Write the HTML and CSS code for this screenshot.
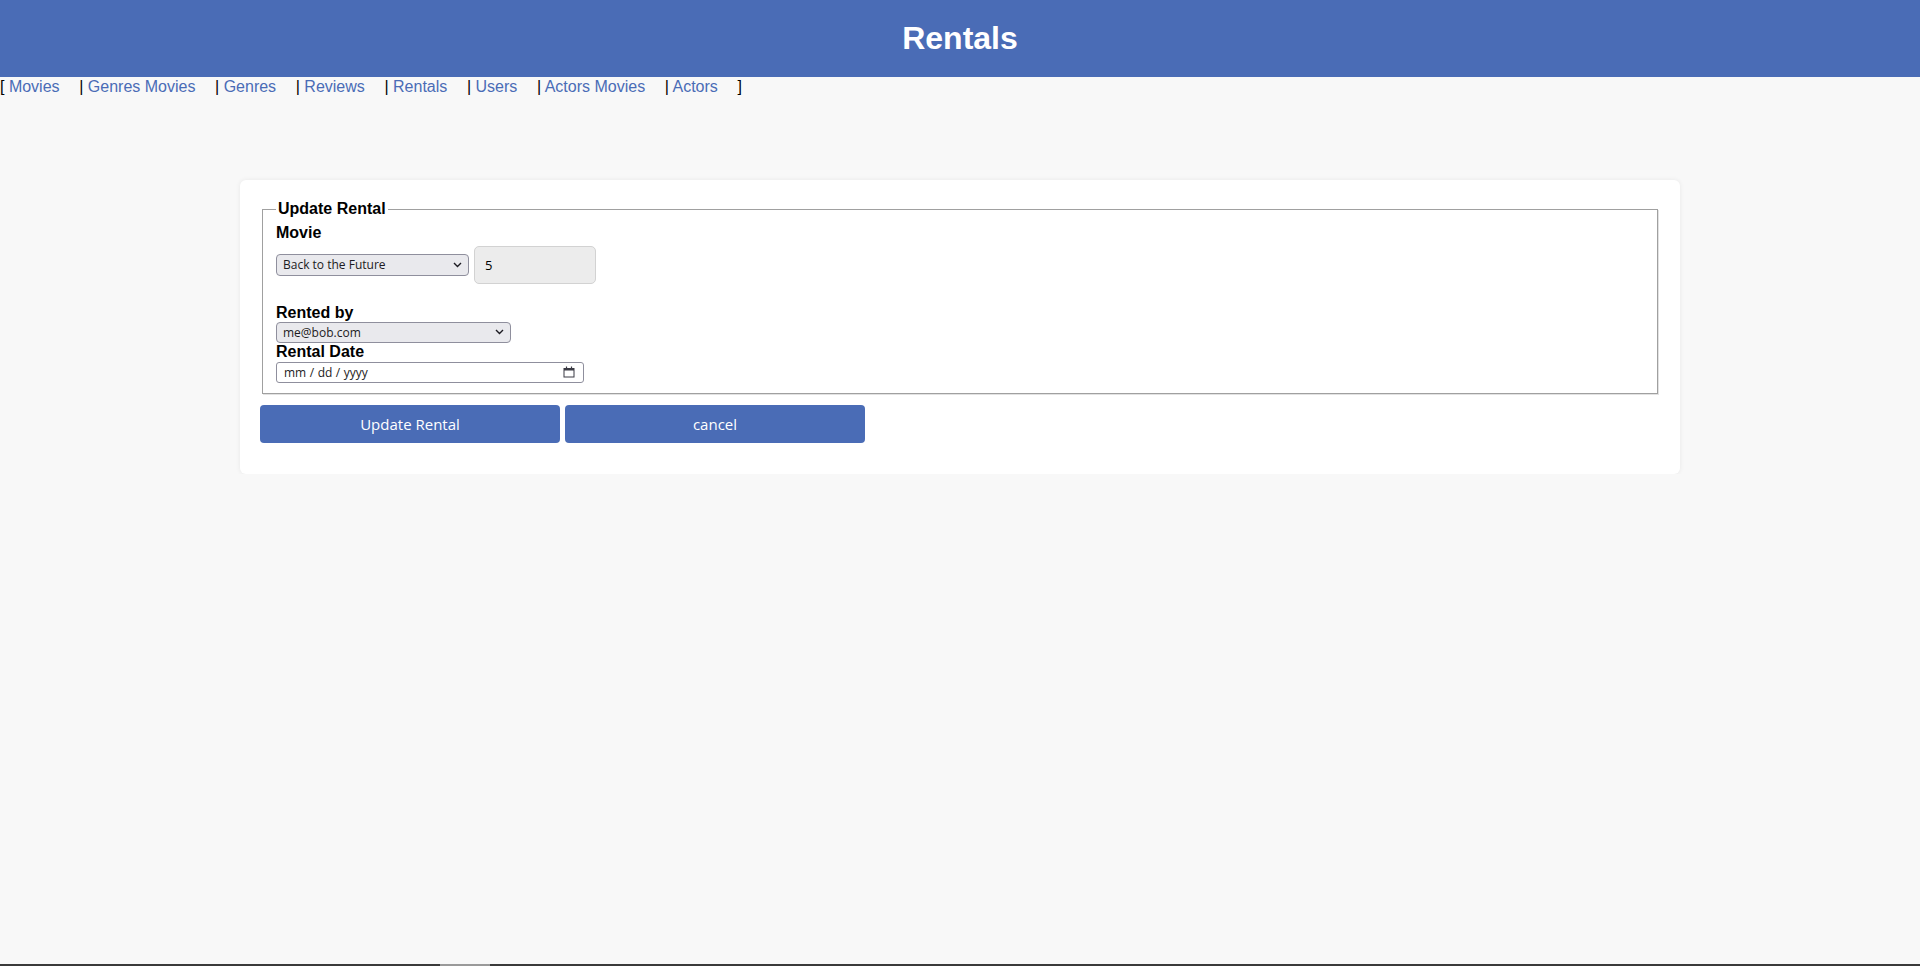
FILE: index.html
```html
<!DOCTYPE html>
<html lang="en">
<head>
<meta charset="utf-8">
<title>Rentals</title>
<link rel="stylesheet" href="styles.css">
</head>
<body>
<header class="topbar">
  <h1 class="title">Rentals</h1>
</header>
<nav class="nav">[ <a class="nav-link" href="#">Movies</a> | <a class="nav-link" href="#">Genres Movies</a> | <a class="nav-link" href="#">Genres</a> | <a class="nav-link" href="#">Reviews</a> | <a class="nav-link" href="#">Rentals</a> | <a class="nav-link" href="#">Users</a> | <a class="nav-link" href="#">Actors Movies</a> | <a class="nav-link" href="#">Actors</a> ]</nav>

<main class="card">
  <form class="form">
    <fieldset class="fieldset">
      <legend class="legend">Update Rental</legend>
      <label class="label" for="movie">Movie</label>
      <div class="movie-row">
        <span class="select-wrap select-movie">
          <select id="movie" class="select">
            <option>Back to the Future</option>
          </select>
          <svg class="chev" width="9" height="6" viewBox="0 0 9 6"><path d="M1 1l3.5 3.5L8 1" fill="none" stroke="#1c1b22" stroke-width="1.4"/></svg>
        </span>
        <input class="num" type="text" value="5" readonly>
      </div>
      <label class="label" for="user">Rented by</label>
      <span class="select-wrap select-user">
        <select id="user" class="select">
          <option>me@bob.com</option>
        </select>
        <svg class="chev" width="9" height="6" viewBox="0 0 9 6"><path d="M1 1l3.5 3.5L8 1" fill="none" stroke="#1c1b22" stroke-width="1.4"/></svg>
      </span>
      <label class="label label-date" for="date">Rental Date</label>
      <span class="date-field">
        <input id="date" class="date" type="date">
        <svg class="cal" width="12" height="12" viewBox="0 0 12 12"><path d="M3.5 0.5v2M8.5 0.5v2" stroke="#3a3a44" stroke-width="1.2"/><rect x="1" y="2.5" width="10" height="8.5" fill="none" stroke="#3a3a44" stroke-width="1"/><rect x="1" y="2.5" width="10" height="2" fill="#3a3a44"/></svg>
      </span>
    </fieldset>
    <div class="actions">
      <button type="button" class="btn">Update Rental</button>
      <button type="button" class="btn">cancel</button>
    </div>
  </form>
</main>
<div class="winbar"><span class="winbar-thumb"></span></div>
</body>
</html>
```
FILE: styles.css
```css
html, body {
  margin: 0;
  padding: 0;
}
body {
  background: #f8f8f8;
  font-family: "Liberation Sans", Arial, sans-serif;
  font-size: 16px;
  color: #000;
}
.topbar {
  background: #4a6cb6;
  padding: 20px 0;
  text-align: center;
}
.title {
  margin: 0;
  font-size: 32px;
  font-weight: bold;
  color: #fff;
  line-height: normal;
}
.nav {
  line-height: normal;
  white-space: nowrap;
  padding-top: 1px;
}
.nav-link {
  color: #4a6cb6;
  text-decoration: none;
  margin-right: 15.2px;
}
.card {
  display: block;
  width: 1440px;
  box-sizing: border-box;
  margin: 84px auto 0;
  background: #fff;
  border-radius: 6px;
  box-shadow: 0 0 5px rgba(0, 0, 0, 0.07);
  padding: 20px 20px 31px;
}
.form {
  margin: 0;
}
.fieldset {
  margin: 0 2px;
  border: 1px solid #a0a0a0;
  box-shadow: 1px 1px 0 #e2e2e2;
  padding: 5.6px 13px 10px;
}
.legend {
  padding: 0 2px;
  font-weight: bold;
  font-size: 16px;
}
.label {
  display: block;
  font-weight: bold;
  font-size: 16px;
  line-height: normal;
}
.label-date {
  margin-bottom: 1px;
}
.movie-row {
  display: flex;
  align-items: center;
  gap: 5px;
  margin: 4px 0 20px;
}
.select-wrap {
  position: relative;
  display: block;
  height: 22px;
}
.select-movie { width: 193px; }
.select-user { width: 235px; height: 21px; }
.select {
  -webkit-appearance: none;
  appearance: none;
  display: block;
  width: 100%;
  height: 100%;
  box-sizing: border-box;
  margin: 0;
  padding: 0 20px 0 6px;
  background: #e9e9ed;
  border: 1px solid #8f8f9d;
  border-radius: 4px;
  font-family: "Open Sans", "Noto Sans", sans-serif;
  font-size: 12px;
  color: #1c1b22;
}
.chev {
  position: absolute;
  right: 7px;
  top: 50%;
  margin-top: -3px;
  pointer-events: none;
}
.num {
  width: 122px;
  height: 38px;
  box-sizing: border-box;
  margin: 0;
  padding: 0 10px;
  background: #ececec;
  border: 1px solid #d2d2d2;
  border-radius: 5px;
  font-family: "Open Sans", "Noto Sans", sans-serif;
  font-size: 13px;
  color: #000;
  outline: none;
}
.date-field {
  display: flex;
  align-items: center;
  width: 308px;
  height: 21px;
  box-sizing: border-box;
  border: 1px solid #8f8f9d;
  border-radius: 3px;
  background: #fff;
  padding: 0 8px 0 6px;
}
.date {
  flex: 1;
  min-width: 0;
  height: 19px;
  border: none;
  padding: 0;
  margin: 0;
  background: transparent;
  font-family: "Open Sans", "Noto Sans", sans-serif;
  font-size: 12px;
  color: #1c1b22;
  outline: none;
}
.date::-webkit-calendar-picker-indicator {
  display: none;
}
.date::-webkit-datetime-edit-text {
  padding: 0 2.5px;
}
.date::-webkit-datetime-edit-fields-wrapper {
  padding: 0;
}
.date::-webkit-datetime-edit {
  padding: 0;
}
.cal {
  flex: none;
}
.actions {
  display: flex;
  gap: 5px;
  margin-top: 11px;
}
.btn {
  width: 300px;
  height: 38px;
  margin: 0;
  border: none;
  border-radius: 4px;
  background: #4a6cb6;
  color: #fff;
  font-family: "Open Sans", "Noto Sans", sans-serif;
  font-size: 15px;
  cursor: pointer;
}
.winbar {
  position: fixed;
  left: 0;
  right: 0;
  bottom: 0;
  height: 2px;
  background: #3a3a3a;
}
.winbar-thumb {
  position: absolute;
  left: 440px;
  width: 50px;
  top: 0;
  bottom: 0;
  background: #9a9a9a;
}
```
